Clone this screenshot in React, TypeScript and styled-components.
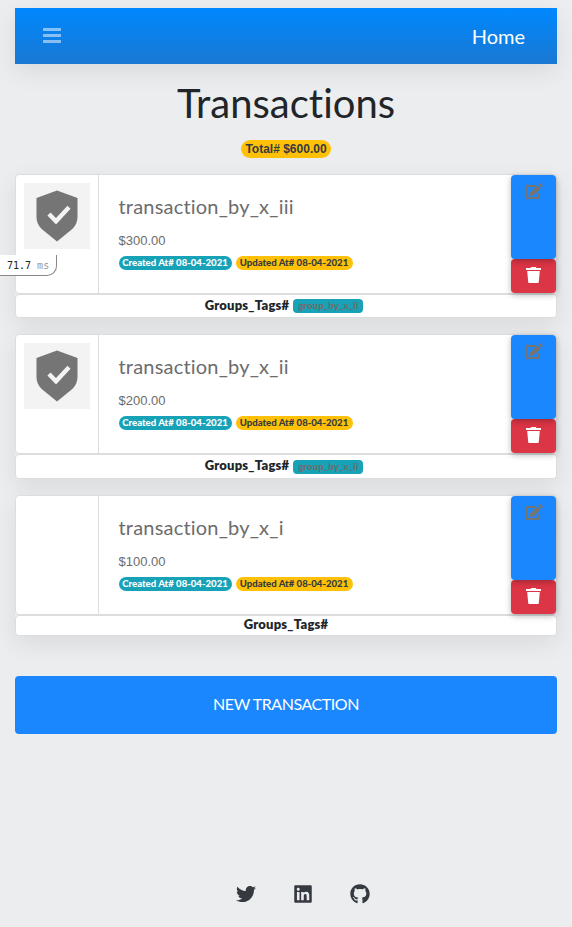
import React from "react";
import styled, { createGlobalStyle } from "styled-components";
import { FaTwitter, FaLinkedin, FaGithub } from "react-icons/fa";

const GlobalStyle = createGlobalStyle`
  *, *::before, *::after { box-sizing: border-box; }
  html { background: #ecedef; }
  body {
    margin: 0;
    background: #ecedef;
    color: #212529;
    font-family: Lato, "Open Sans", sans-serif;
    font-variant-ligatures: none;
    overflow: hidden;
  }
  h1, h2, p { margin: 0; font-weight: 400; }
  svg { display: block; flex: none; }
`;

const Page = styled.main`
  position: relative;
  display: flex;
  flex-direction: column;
  height: 927px;
  padding: 8px 15px 0;
`;

const Navbar = styled.nav`
  display: flex;
  flex: none;
  align-items: center;
  justify-content: space-between;
  height: 56px;
  padding: 0 32px 0 28px;
  background: linear-gradient(#0088ff, #1a78d2);
  box-shadow: 0 8px 24px rgba(0, 0, 0, 0.08);
`;

const MenuButton = styled.button`
  display: flex;
  padding: 0 0 1px;
  border: 0;
  background: none;
  color: rgba(255, 255, 255, 0.5);
`;

const NavLink = styled.a`
  color: #fff;
  font-size: 20px;
  line-height: 30px;
  margin-bottom: 1px;
`;

const Title = styled.h1`
  margin-top: 15px;
  font-size: 40px;
  line-height: 48px;
  text-align: center;
`;

const Total = styled.span`
  align-self: center;
  height: 18px;
  margin: 13px 0 16.1px;
  padding: 0 4.5px;
  border-radius: 9px;
  background: #ffc107;
  color: #343a40;
  font: 700 12px/18px "Liberation Sans", sans-serif;
`;

const Transaction = styled.article`
  flex: none;
  margin-bottom: 16px;
  border-radius: 4px;
  box-shadow: 0 8px 24px rgba(0, 0, 0, 0.08);
`;

const CardBody = styled.div`
  display: flex;
  height: 120px;
  border: 1px solid #dcddde;
  border-radius: 4px;
  background: #fff;
`;

const Thumbnail = styled.div`
  width: 83px;
  padding: 8px;
  border-right: 1px solid #dcddde;
`;

const ShieldTile = styled.div`
  display: flex;
  align-items: center;
  justify-content: center;
  width: 66px;
  height: 66px;
  background: #f3f3f3;
  color: #757575;
`;

const Details = styled.div`
  flex: 1;
  padding: 19px 0 0 19.5px;
`;

const Name = styled.h2`
  color: #6c6c6c;
  font-size: 20px;
  line-height: 24px;
  letter-spacing: 0.2px;
`;

const Amount = styled.p`
  margin-top: 13px;
  color: #6c6c6c;
  font: 400 13px/19px "Liberation Sans", sans-serif;
`;

const Badges = styled.div`
  display: flex;
  gap: 4px;
  margin-top: 6px;
`;

const DateBadge = styled.span<{ $tone: "info" | "warning" }>`
  width: ${({ $tone }) => ($tone === "info" ? 113 : 117)}px;
  height: 14px;
  border-radius: 7px;
  background: ${({ $tone }) => ($tone === "info" ? "#17a2b8" : "#ffc107")};
  color: ${({ $tone }) => ($tone === "info" ? "#fff" : "#343a40")};
  font-size: 9.6px;
  font-weight: 900;
  line-height: 13px;
  text-align: center;
  white-space: nowrap;
`;

const Actions = styled.div`
  display: flex;
  flex-direction: column;
  width: 45px;
`;

const ActionButton = styled.button<{ $danger?: boolean }>`
  display: flex;
  flex: ${({ $danger }) => ($danger ? "0 0 34px" : "1")};
  align-items: flex-start;
  justify-content: center;
  padding: 8px 0 0;
  border: 0;
  border-radius: 4px;
  background: ${({ $danger }) => ($danger ? "#dc3545" : "#1a87ff")};
  color: ${({ $danger }) => ($danger ? "#fff" : "#757575")};
  box-shadow: 0 2px 6px rgba(0, 0, 0, 0.28);
`;

const EditButton = styled(ActionButton)`
  z-index: 1;
`;

const Groups = styled.div<{ $empty: boolean }>`
  display: flex;
  align-items: center;
  justify-content: center;
  gap: 4px;
  height: ${({ $empty }) => ($empty ? 21 : 24.3)}px;
  padding: ${({ $empty }) => ($empty ? "0 0 1px" : "0 4px 0 0")};
  border: 1px solid #dcddde;
  border-radius: 4px;
  background: #fff;
`;

const GroupsLabel = styled.strong<{ $raised: boolean }>`
  font-size: 13px;
  font-weight: 800;
  line-height: 18px;
  letter-spacing: 0.22px;
  margin-bottom: ${({ $raised }) => ($raised ? 2.5 : 1)}px;
`;

const GroupTag = styled.span`
  width: 70px;
  height: 14px;
  border-radius: 4px;
  background: #17a2b8;
  color: #6c6c6c;
  font-size: 9.6px;
  font-weight: 900;
  line-height: 13px;
  text-align: center;
  letter-spacing: 0.1px;
`;

const NewButton = styled.button`
  flex: none;
  height: 58px;
  margin-top: 24.3px;
  padding: 0 0 2px;
  border: 0;
  border-radius: 4px;
  background: #1a87ff;
  color: #fff;
  font: 400 16px/24px Lato, sans-serif;
  letter-spacing: -0.45px;
`;

const Social = styled.footer`
  display: flex;
  justify-content: center;
  gap: 37px;
  margin: auto 0 23.5px 33px;
  color: #343a40;
`;

const Timing = styled.div`
  position: absolute;
  left: 0;
  top: 255px;
  z-index: 2;
  width: 57px;
  height: 21px;
  padding-left: 7px;
  border: solid #888;
  border-width: 0 1px 1px 0;
  border-bottom-right-radius: 10px;
  background: #fff;
  color: #222;
  font: 10px/21px "DejaVu Sans Mono", monospace;
  white-space: pre;
`;

const Unit = styled.span`
  color: #999;
`;

const MenuIcon = () => (
  <svg width="18" height="15" viewBox="0 0 18 15" fill="currentColor">
    <path d="M0 0h18v3H0zM0 6h18v3H0zM0 12h18v3H0z" />
  </svg>
);

const ShieldIcon = () => (
  <svg width="42" height="52" viewBox="0 0 42 52">
    <path
      fill="currentColor"
      d="M21 .5 41.5 8v19c0 5-2 8.800-5.200 12L21 51.500 5.700 39C2.500 35.800.5 32 .5 27V8z"
    />
    <path d="m13 24 7 7.300 13-14" fill="none" stroke="#f3f3f3" strokeWidth="4.300" />
  </svg>
);

const EditIcon = () => (
  <svg width="18" height="16" viewBox="0 0 18 16">
    <path d="M10.300 3H1v12h12.400v-4.800" fill="none" stroke="currentColor" strokeWidth="2" />
    <path
      fill="currentColor"
      d="m5.200 9.200 7.200-7 3.300 3.300-7 7-3.900.8zM13.200 1.500l1-1a1.200 1.200 0 0 1 1.700 0l1.500 1.500a1.200 1.200 0 0 1 0 1.700l-1 1z"
    />
  </svg>
);

const TrashIcon = () => (
  <svg width="15" height="16" viewBox="0 0 15 16" fill="currentColor">
    <path d="M0 1h4.500l.8-1h4.400l.8 1H15v2H0zM1.200 4h12.600l-1 11a1 1 0 0 1-1 1H3.200a1 1 0 0 1-1-1z" />
  </svg>
);

interface Entry {
  name: string;
  amount: string;
  icon: boolean;
  group?: string;
}

const entries: Entry[] = [
  { name: "transaction_by_x_iii", amount: "$300.00", icon: true, group: "group_by_x_ii" },
  { name: "transaction_by_x_ii", amount: "$200.00", icon: true, group: "group_by_x_ii" },
  { name: "transaction_by_x_i", amount: "$100.00", icon: false },
];

function TransactionCard({ entry }: { entry: Entry }) {
  return (
    <Transaction>
      <CardBody>
        <Thumbnail>
          {entry.icon && (
            <ShieldTile>
              <ShieldIcon />
            </ShieldTile>
          )}
        </Thumbnail>
        <Details>
          <Name>{entry.name}</Name>
          <Amount>{entry.amount}</Amount>
          <Badges>
            <DateBadge $tone="info">Created At# 08-04-2021</DateBadge>
            <DateBadge $tone="warning">Updated At# 08-04-2021</DateBadge>
          </Badges>
        </Details>
        <Actions>
          <EditButton aria-label="Edit">
            <EditIcon />
          </EditButton>
          <ActionButton $danger aria-label="Delete">
            <TrashIcon />
          </ActionButton>
        </Actions>
      </CardBody>
      <Groups $empty={!entry.group}>
        <GroupsLabel $raised={!!entry.group}>Groups_Tags#</GroupsLabel>
        {entry.group && <GroupTag>{entry.group}</GroupTag>}
      </Groups>
    </Transaction>
  );
}

export default function App() {
  return (
    <>
      <GlobalStyle />
      <Page>
        <Navbar>
          <MenuButton aria-label="Menu">
            <MenuIcon />
          </MenuButton>
          <NavLink>Home</NavLink>
        </Navbar>
        <Title>Transactions</Title>
        <Total>Total# $600.00</Total>
        {entries.map((entry) => (
          <TransactionCard key={entry.name} entry={entry} />
        ))}
        <NewButton>NEW TRANSACTION</NewButton>
        <Social>
          <FaTwitter size={20} />
          <FaLinkedin size={20} />
          <FaGithub size={20} />
        </Social>
        <Timing>
          71.7 <Unit>ms</Unit>
        </Timing>
      </Page>
    </>
  );
}
